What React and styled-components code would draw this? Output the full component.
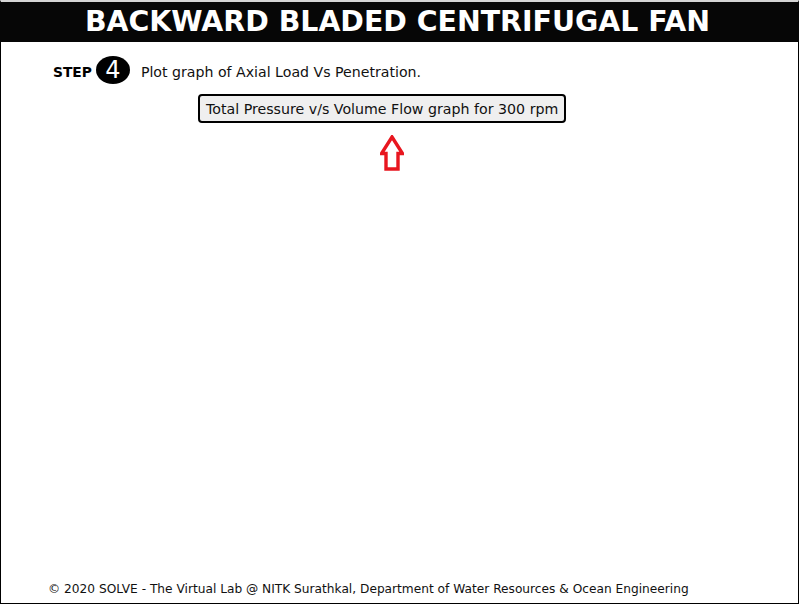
import React from 'react';
import styled, { createGlobalStyle } from 'styled-components';

const Global = createGlobalStyle`
  html, body {
    margin: 0;
    padding: 0;
    background: #fff;
  }
  body {
    font-family: "DejaVu Sans", Verdana, sans-serif;
  }
`;

function UpArrow() {
  return (
    <svg width="24" height="36" viewBox="0 0 24 36">
      <path
        d="M12 2 L22.5 18.5 L18 18.5 L18 34 L6 34 L6 18.5 L1.5 18.5 Z"
        fill="none"
        stroke="#e8161f"
        strokeWidth="3.4"
        strokeLinejoin="miter"
      />
    </svg>
  );
}

function App() {
  return (
    <>
      <Global />
      <Page>
        <Header>BACKWARD BLADED CENTRIFUGAL FAN</Header>
        <StepRow>
          <StepLabel>STEP</StepLabel>
          <StepBadge>4</StepBadge>
          <StepText>Plot graph of Axial Load Vs Penetration.</StepText>
        </StepRow>
        <GraphButton>Total Pressure v/s Volume Flow graph for 300 rpm</GraphButton>
        <ArrowWrap>
          <UpArrow />
        </ArrowWrap>
        <Footer>
          © 2020 SOLVE - The Virtual Lab @ NITK Surathkal, Department of Water Resources &amp; Ocean Engineering
        </Footer>
      </Page>
    </>
  );
}

export default App;

const Page = styled.div`
  width: 799px;
  height: 604px;
  box-sizing: border-box;
  border: 1px solid #000;
  border-top: 2px solid #d4d4d4;
  display: flex;
  flex-direction: column;
`;

const Header = styled.h1`
  margin: 0 -1px;
  padding-right: 4px;
  height: 40px;
  background: #060606;
  color: #fff;
  font-family: "DejaVu Sans", Verdana, sans-serif;
  font-weight: bold;
  font-size: 28.4px;
  line-height: 40px;
  text-align: center;
`;

const StepRow = styled.div`
  display: flex;
  align-items: center;
  padding-left: 52px;
  margin-top: 14px;
  height: 28px;
`;

const StepLabel = styled.span`
  font-weight: bold;
  font-size: 13.8px;
  color: #000;
  padding-top: 3px;
`;

const StepBadge = styled.span`
  width: 34px;
  height: 28px;
  border-radius: 50%;
  background: #000;
  color: #fff;
  font-size: 24px;
  line-height: 28px;
  text-align: center;
  margin-left: 4px;
`;

const StepText = styled.span`
  font-size: 14.15px;
  color: #111;
  margin-left: 11px;
  padding-top: 4px;
`;

const GraphButton = styled.button`
  align-self: flex-start;
  margin-left: 197px;
  margin-top: 10px;
  height: 29px;
  padding: 0 6px;
  border: 2px solid #000;
  border-radius: 4px;
  background: #efefef;
  color: #111;
  font-family: "DejaVu Sans", Verdana, sans-serif;
  font-size: 14.2px;
`;

const ArrowWrap = styled.div`
  margin-left: 379px;
  margin-top: 12px;
  line-height: 0;
`;

const Footer = styled.div`
  margin-top: auto;
  padding-left: 47px;
  padding-bottom: 7px;
  font-size: 12.2px;
  color: #111;
`;
